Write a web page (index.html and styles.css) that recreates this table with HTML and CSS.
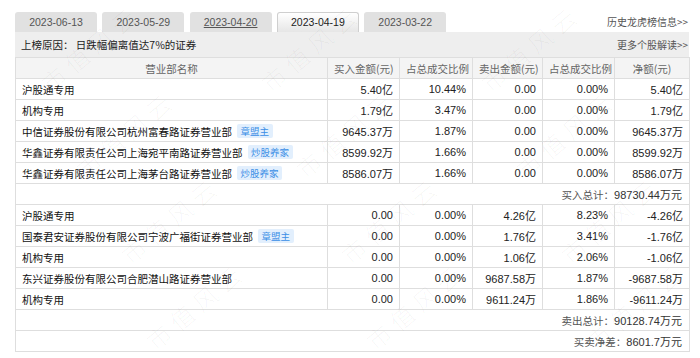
FILE: index.html
```html
<!DOCTYPE html>
<html lang="zh-CN">
<head>
<meta charset="utf-8">
<title>龙虎榜</title>
<link rel="stylesheet" href="styles.css">
</head>
<body>
<div class="page">
  <div class="tabbar">
    <div class="tabs">
      <a class="tab">2023-06-13</a>
      <a class="tab">2023-05-29</a>
      <a class="tab tab-hover">2023-04-20</a>
      <a class="tab tab-active">2023-04-19</a>
      <a class="tab">2023-03-22</a>
    </div>
    <a class="link history">历史龙虎榜信息&gt;&gt;</a>
  </div>
  <div class="reason">
    <span class="reason-text">上榜原因：&nbsp;日跌幅偏离值达7%的证券</span>
    <a class="link">更多个股解读&gt;&gt;</a>
  </div>
  <table class="lhb">
    <colgroup>
      <col class="c-name"><col class="c-buy"><col class="c-bp"><col class="c-sell"><col class="c-sp"><col class="c-net">
    </colgroup>
    <thead>
      <tr><th>营业部名称</th><th>买入金额(元)</th><th>占总成交比例</th><th>卖出金额(元)</th><th>占总成交比例</th><th>净额(元)</th></tr>
    </thead>
    <tbody>
      <tr><td class="name">沪股通专用</td><td>5.40亿</td><td>10.44%</td><td>0.00</td><td>0.00%</td><td>5.40亿</td></tr>
      <tr><td class="name">机构专用</td><td>1.79亿</td><td>3.47%</td><td>0.00</td><td>0.00%</td><td>1.79亿</td></tr>
      <tr><td class="name">中信证券股份有限公司杭州富春路证券营业部<span class="tag">章盟主</span></td><td>9645.37万</td><td>1.87%</td><td>0.00</td><td>0.00%</td><td>9645.37万</td></tr>
      <tr><td class="name">华鑫证券有限责任公司上海宛平南路证券营业部<span class="tag">炒股养家</span></td><td>8599.92万</td><td>1.66%</td><td>0.00</td><td>0.00%</td><td>8599.92万</td></tr>
      <tr><td class="name">华鑫证券有限责任公司上海茅台路证券营业部<span class="tag">炒股养家</span></td><td>8586.07万</td><td>1.66%</td><td>0.00</td><td>0.00%</td><td>8586.07万</td></tr>
      <tr class="total"><td colspan="6"><span class="total-label">买入总计：</span>98730.44万元</td></tr>
      <tr><td class="name">沪股通专用</td><td>0.00</td><td>0.00%</td><td>4.26亿</td><td>8.23%</td><td>-4.26亿</td></tr>
      <tr><td class="name">国泰君安证券股份有限公司宁波广福街证券营业部<span class="tag">章盟主</span></td><td>0.00</td><td>0.00%</td><td>1.76亿</td><td>3.41%</td><td>-1.76亿</td></tr>
      <tr><td class="name">机构专用</td><td>0.00</td><td>0.00%</td><td>1.06亿</td><td>2.06%</td><td>-1.06亿</td></tr>
      <tr><td class="name">东兴证券股份有限公司合肥潜山路证券营业部</td><td>0.00</td><td>0.00%</td><td>9687.58万</td><td>1.87%</td><td>-9687.58万</td></tr>
      <tr><td class="name">机构专用</td><td>0.00</td><td>0.00%</td><td>9611.24万</td><td>1.86%</td><td>-9611.24万</td></tr>
      <tr class="total"><td colspan="6"><span class="total-label">卖出总计：</span>90128.74万元</td></tr>
      <tr class="total"><td colspan="6"><span class="total-label">买卖净差：</span>8601.7万元</td></tr>
    </tbody>
  </table>
  <div class="watermark" aria-hidden="true">
    <div class="wm-row wm-r1"><span class="wm">市值风云</span><span class="wm">市值风云</span><span class="wm">市值风云</span></div>
    <div class="wm-row wm-r2"><span class="wm">市值风云</span><span class="wm">市值风云</span><span class="wm">市值风云</span></div>
    <div class="wm-row wm-r3"><span class="wm">市值风云</span><span class="wm">市值风云</span><span class="wm">市值风云</span></div>
    <div class="wm-row wm-r4"><span class="wm">市值风云</span><span class="wm">市值风云</span><span class="wm">市值风云</span></div>
  </div>
</div>
</body>
</html>
```
FILE: styles.css
```css
html, body {
  margin: 0;
  padding: 0;
  background: #fff;
}

body {
  font-family: "Noto Sans CJK SC", "Noto Sans", sans-serif;
  font-size: 10.5px;
  color: #333;
}

.page {
  position: relative;
  width: 674px;
  height: 346px;
  padding: 12px 11px 0 15px;
  overflow: hidden;
}

.tabbar {
  display: flex;
  justify-content: space-between;
  align-items: flex-start;
  height: 20px;
}

.tabs {
  display: flex;
  gap: 5.3px;
}

.tab {
  box-sizing: border-box;
  width: 82px;
  height: 20px;
  line-height: 20px;
  text-align: center;
  font-family: "Liberation Sans", Arial, sans-serif;
  font-size: 10.5px;
  color: #555;
  background: #e1e1e1;
  border-radius: 3px 3px 0 0;
}

.tab-hover {
  text-decoration: underline;
}

.tab-active {
  background: linear-gradient(#ffffff, #e6e6e6);
  border: 1px solid #cfcfcf;
  border-bottom: none;
  color: #222;
  line-height: 19px;
}

.link {
  color: #555;
  font-size: 10px;
  white-space: nowrap;
}

.history {
  margin-top: 2px;
  margin-right: 1px;
}

.reason {
  display: flex;
  justify-content: space-between;
  align-items: center;
  height: 25px;
  padding: 0 1px 0 6px;
  background: #eeeeee;
}

.reason-text {
  color: #222;
}

.lhb {
  width: 674px;
  border-collapse: collapse;
  table-layout: fixed;
  border: 1px solid #dcdcdc;
}

.c-name { width: 312px; }
.c-buy { width: 72px; }
.c-bp { width: 73px; }
.c-sell { width: 70px; }
.c-sp { width: 72px; }
.c-net { width: 75px; }

.lhb th,
.lhb td {
  height: 20px;
  padding: 0 6px;
  border: 1px solid #dedede;
  white-space: nowrap;
  overflow: hidden;
}

.lhb th {
  font-weight: normal;
  color: #666;
  background: #f4f4f4;
  text-align: center;
}

.lhb td {
  text-align: right;
  font-family: "Liberation Sans", Arial, "Noto Sans CJK SC", sans-serif;
  font-size: 11px;
  color: #222;
}

.lhb td.name {
  text-align: left;
  font-family: "Noto Sans CJK SC", sans-serif;
  font-size: 10.5px;
  color: #111;
  padding-left: 6px;
}

.tag {
  display: inline-block;
  margin-left: 5px;
  padding: 0 3.5px;
  height: 14px;
  line-height: 14px;
  font-size: 9.5px;
  color: #3a8ee6;
  background: #e2effd;
  border-radius: 2px;
  vertical-align: 1px;
}

.lhb tr.total td {
  padding-right: 7px;
  font-size: 11px;
  color: #333;
}

.total-label {
  font-family: "Noto Sans CJK SC", sans-serif;
  font-size: 10.5px;
  color: #555;
}

.watermark {
  position: absolute;
  top: 4px;
  left: 0;
  right: 0;
  pointer-events: none;
}

.wm-row {
  display: flex;
  height: 86px;
}

.wm-r1 { margin-left: -20px; }
.wm-r2 { margin-left: 15px; }
.wm-r3 { margin-left: 60px; }
.wm-r4 { margin-left: 85px; }

.wm {
  flex: 0 0 220px;
  display: flex;
  align-items: center;
  justify-content: center;
  font-family: "Noto Sans CJK SC", sans-serif;
  font-weight: 300;
  font-size: 24px;
  letter-spacing: 6px;
  color: rgba(0, 0, 0, 0.04);
  transform: rotate(-40deg);
  white-space: nowrap;
}
```
